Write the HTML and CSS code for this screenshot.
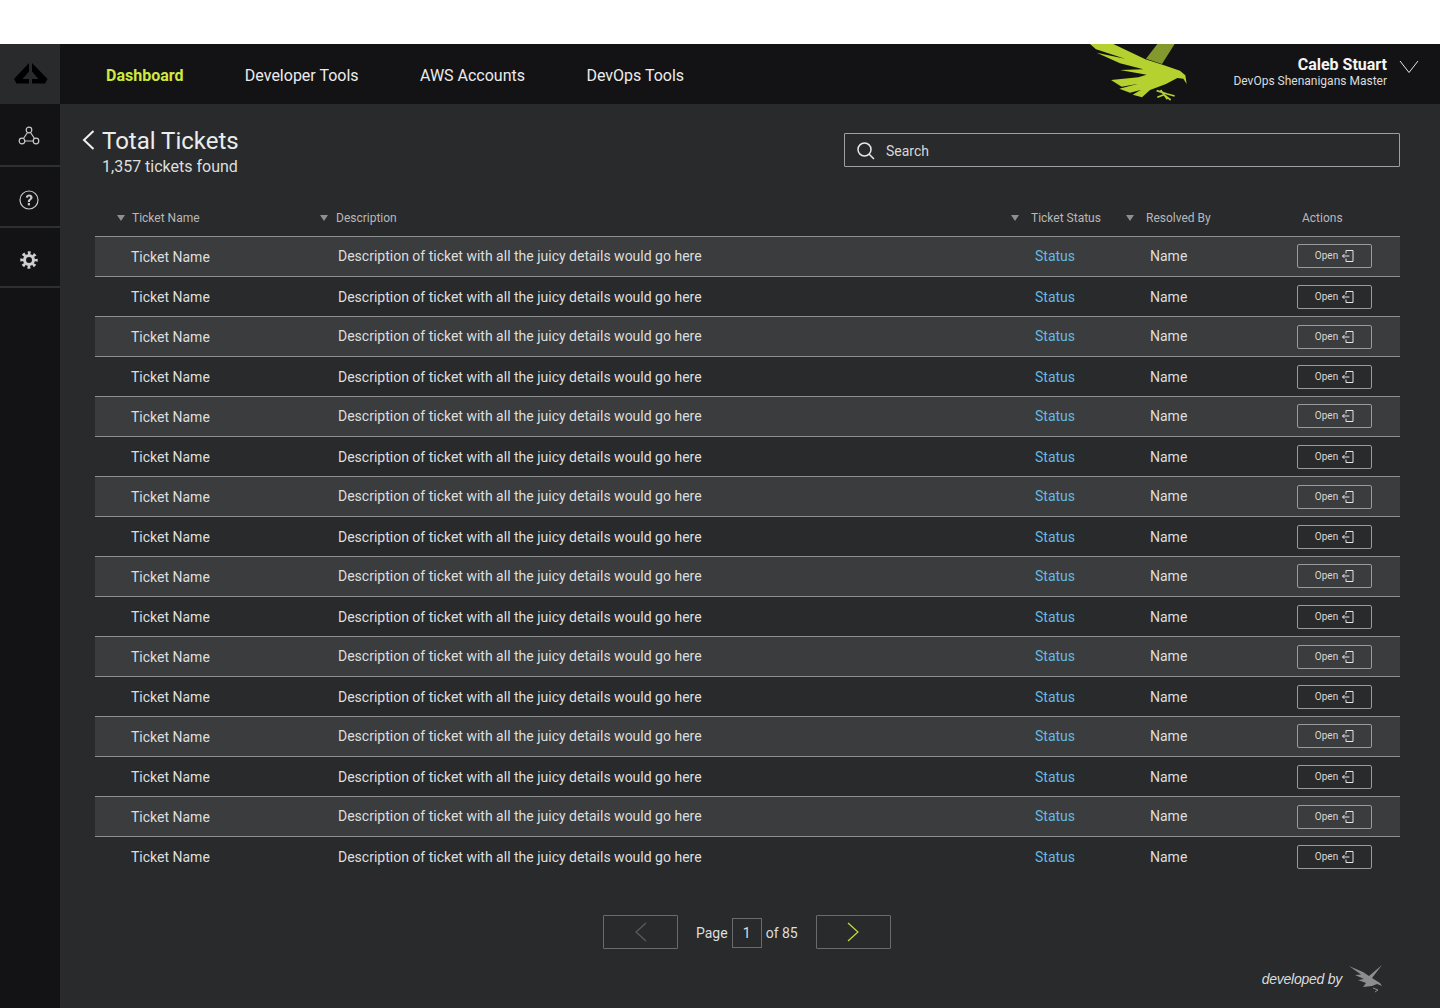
FILE: index.html
```html
<!DOCTYPE html>
<html lang="en">
<head>
<meta charset="utf-8">
<title>Total Tickets</title>
<link rel="stylesheet" href="styles.css">
</head>
<body>
<div class="topgap"></div>
<div class="app">
  <aside class="sidebar">
    <div class="brand">
      <svg class="brand-logo" width="34" height="22" viewBox="0 0 34 22"><path fill="#000" d="M15 0V8.500L8.500 16H15V20.500H2.500L0 16ZM18 0V8.500L24.500 16H18V20.500H31L33.500 16Z"/></svg>
    </div>
    <div class="side-item side-first">
      <svg width="22" height="20" viewBox="0 0 22 20" fill="none" stroke="#c8c8c8" stroke-width="1.200"><circle cx="11" cy="4" r="2.800"/><circle cx="4" cy="15" r="2.800"/><circle cx="18" cy="15" r="2.800"/><path d="M9.500 6.500L5.500 12.500M12.500 6.500L16.500 12.500M6.800 15H15.200"/></svg>
    </div>
    <div class="side-item side-mid">
      <svg width="20" height="20" viewBox="0 0 20 20"><circle cx="10" cy="10" r="9" fill="none" stroke="#c8c8c8" stroke-width="1.200"/><path d="M6.800 7.600C6.800 3.400 13.600 3.400 13.600 7.500C13.600 9.800 11 9.600 11 12H8.800C8.800 9 11.200 9.200 11.200 7.500C11.200 6 9 6 8.900 7.800Z" fill="#c8c8c8"/><rect x="8.800" y="13" width="2.200" height="2.400" fill="#c8c8c8"/></svg>
    </div>
    <div class="side-item side-last">
      <svg width="18" height="18" viewBox="0 0 20 20" fill="none" stroke="#cfcfcf"><circle cx="10" cy="10" r="5" stroke-width="3.400"/><circle cx="10" cy="10" r="7.800" stroke-width="3.800" stroke-dasharray="3.060 3.066" stroke-dashoffset="1.530"/></svg>
    </div>
  </aside>
  <div class="content">
    <header class="nav">
      <nav class="nav-links">
        <a class="nav-link nav-active">Dashboard</a>
        <a class="nav-link">Developer Tools</a>
        <a class="nav-link">AWS Accounts</a>
        <a class="nav-link">DevOps Tools</a>
      </nav>
      <svg class="eagle" width="120" height="60" viewBox="0 12 360 180">
        <path fill="#83992d" d="M232 12H284L246 72L198 56Z"/>
        <path fill="#b4d12f" d="M30 12H100L196 58L250 75L300 92L316 106L320 132L310 116L292 114L258 132L210 150L186 172L158 164L182 150L150 158L118 146L172 132L125 140L93 120L175 112L200 104L120 90L190 88L120 70L50 38L135 56L48 28Z"/>
        <path fill="none" stroke="#b4d12f" stroke-width="5" d="M230 152L262 162L284 168M242 150L262 178M232 172L252 164L272 180"/>
      </svg>
      <div class="user">
        <div class="user-name">Caleb Stuart</div>
        <div class="user-role">DevOps Shenanigans Master</div>
      </div>
      <svg class="user-caret" width="20" height="14" viewBox="0 0 20 14" fill="none" stroke="#e6e6e6" stroke-width="1"><path d="M1 1L10 12.500L19 1"/></svg>
    </header>
    <main class="main">
      <div class="page-head">
        <svg class="back" width="13" height="20" viewBox="0 0 13 20" fill="none" stroke="#f0f0f0" stroke-width="2"><path d="M11.500 1L2 10L11.500 19"/></svg>
        <div class="titles">
          <h1 class="title">Total Tickets</h1>
          <p class="subtitle">1,357 tickets found</p>
        </div>
        <label class="search">
          <svg width="18" height="18" viewBox="0 0 18 18" fill="none" stroke="#e8e8e8" stroke-width="1.500"><circle cx="7.500" cy="7.500" r="6.500"/><path d="M12.200 12.200L17 17"/></svg>
          <span class="search-text">Search</span>
        </label>
      </div>
      <section class="table">
        <div class="thead">
          <div class="th th-name"><i class="sort"></i>Ticket Name</div>
          <div class="th th-desc"><i class="sort"></i>Description</div>
          <div class="th th-status"><i class="sort"></i>Ticket Status</div>
          <div class="th th-res"><i class="sort"></i>Resolved By</div>
          <div class="th">Actions</div>
        </div>
        <div class="row"><div class="c-name">Ticket Name</div><div class="c-desc">Description of ticket with all the juicy details would go here</div><div class="c-status">Status</div><div class="c-res">Name</div><div><a class="open">Open<svg class="open-ic" width="12" height="12" viewBox="0 0 12 12" fill="none" stroke="#e4e4e4"><path d="M4 3.500V.5H11V11.500H4V8.500M7.500 6H.5M2.500 4L.5 6L2.500 8"/></svg></a></div></div>
        <div class="row"><div class="c-name">Ticket Name</div><div class="c-desc">Description of ticket with all the juicy details would go here</div><div class="c-status">Status</div><div class="c-res">Name</div><div><a class="open">Open<svg class="open-ic" width="12" height="12" viewBox="0 0 12 12" fill="none" stroke="#e4e4e4"><path d="M4 3.500V.5H11V11.500H4V8.500M7.500 6H.5M2.500 4L.5 6L2.500 8"/></svg></a></div></div>
        <div class="row"><div class="c-name">Ticket Name</div><div class="c-desc">Description of ticket with all the juicy details would go here</div><div class="c-status">Status</div><div class="c-res">Name</div><div><a class="open">Open<svg class="open-ic" width="12" height="12" viewBox="0 0 12 12" fill="none" stroke="#e4e4e4"><path d="M4 3.500V.5H11V11.500H4V8.500M7.500 6H.5M2.500 4L.5 6L2.500 8"/></svg></a></div></div>
        <div class="row"><div class="c-name">Ticket Name</div><div class="c-desc">Description of ticket with all the juicy details would go here</div><div class="c-status">Status</div><div class="c-res">Name</div><div><a class="open">Open<svg class="open-ic" width="12" height="12" viewBox="0 0 12 12" fill="none" stroke="#e4e4e4"><path d="M4 3.500V.5H11V11.500H4V8.500M7.500 6H.5M2.500 4L.5 6L2.500 8"/></svg></a></div></div>
        <div class="row"><div class="c-name">Ticket Name</div><div class="c-desc">Description of ticket with all the juicy details would go here</div><div class="c-status">Status</div><div class="c-res">Name</div><div><a class="open">Open<svg class="open-ic" width="12" height="12" viewBox="0 0 12 12" fill="none" stroke="#e4e4e4"><path d="M4 3.500V.5H11V11.500H4V8.500M7.500 6H.5M2.500 4L.5 6L2.500 8"/></svg></a></div></div>
        <div class="row"><div class="c-name">Ticket Name</div><div class="c-desc">Description of ticket with all the juicy details would go here</div><div class="c-status">Status</div><div class="c-res">Name</div><div><a class="open">Open<svg class="open-ic" width="12" height="12" viewBox="0 0 12 12" fill="none" stroke="#e4e4e4"><path d="M4 3.500V.5H11V11.500H4V8.500M7.500 6H.5M2.500 4L.5 6L2.500 8"/></svg></a></div></div>
        <div class="row"><div class="c-name">Ticket Name</div><div class="c-desc">Description of ticket with all the juicy details would go here</div><div class="c-status">Status</div><div class="c-res">Name</div><div><a class="open">Open<svg class="open-ic" width="12" height="12" viewBox="0 0 12 12" fill="none" stroke="#e4e4e4"><path d="M4 3.500V.5H11V11.500H4V8.500M7.500 6H.5M2.500 4L.5 6L2.500 8"/></svg></a></div></div>
        <div class="row"><div class="c-name">Ticket Name</div><div class="c-desc">Description of ticket with all the juicy details would go here</div><div class="c-status">Status</div><div class="c-res">Name</div><div><a class="open">Open<svg class="open-ic" width="12" height="12" viewBox="0 0 12 12" fill="none" stroke="#e4e4e4"><path d="M4 3.500V.5H11V11.500H4V8.500M7.500 6H.5M2.500 4L.5 6L2.500 8"/></svg></a></div></div>
        <div class="row"><div class="c-name">Ticket Name</div><div class="c-desc">Description of ticket with all the juicy details would go here</div><div class="c-status">Status</div><div class="c-res">Name</div><div><a class="open">Open<svg class="open-ic" width="12" height="12" viewBox="0 0 12 12" fill="none" stroke="#e4e4e4"><path d="M4 3.500V.5H11V11.500H4V8.500M7.500 6H.5M2.500 4L.5 6L2.500 8"/></svg></a></div></div>
        <div class="row"><div class="c-name">Ticket Name</div><div class="c-desc">Description of ticket with all the juicy details would go here</div><div class="c-status">Status</div><div class="c-res">Name</div><div><a class="open">Open<svg class="open-ic" width="12" height="12" viewBox="0 0 12 12" fill="none" stroke="#e4e4e4"><path d="M4 3.500V.5H11V11.500H4V8.500M7.500 6H.5M2.500 4L.5 6L2.500 8"/></svg></a></div></div>
        <div class="row"><div class="c-name">Ticket Name</div><div class="c-desc">Description of ticket with all the juicy details would go here</div><div class="c-status">Status</div><div class="c-res">Name</div><div><a class="open">Open<svg class="open-ic" width="12" height="12" viewBox="0 0 12 12" fill="none" stroke="#e4e4e4"><path d="M4 3.500V.5H11V11.500H4V8.500M7.500 6H.5M2.500 4L.5 6L2.500 8"/></svg></a></div></div>
        <div class="row"><div class="c-name">Ticket Name</div><div class="c-desc">Description of ticket with all the juicy details would go here</div><div class="c-status">Status</div><div class="c-res">Name</div><div><a class="open">Open<svg class="open-ic" width="12" height="12" viewBox="0 0 12 12" fill="none" stroke="#e4e4e4"><path d="M4 3.500V.5H11V11.500H4V8.500M7.500 6H.5M2.500 4L.5 6L2.500 8"/></svg></a></div></div>
        <div class="row"><div class="c-name">Ticket Name</div><div class="c-desc">Description of ticket with all the juicy details would go here</div><div class="c-status">Status</div><div class="c-res">Name</div><div><a class="open">Open<svg class="open-ic" width="12" height="12" viewBox="0 0 12 12" fill="none" stroke="#e4e4e4"><path d="M4 3.500V.5H11V11.500H4V8.500M7.500 6H.5M2.500 4L.5 6L2.500 8"/></svg></a></div></div>
        <div class="row"><div class="c-name">Ticket Name</div><div class="c-desc">Description of ticket with all the juicy details would go here</div><div class="c-status">Status</div><div class="c-res">Name</div><div><a class="open">Open<svg class="open-ic" width="12" height="12" viewBox="0 0 12 12" fill="none" stroke="#e4e4e4"><path d="M4 3.500V.5H11V11.500H4V8.500M7.500 6H.5M2.500 4L.5 6L2.500 8"/></svg></a></div></div>
        <div class="row"><div class="c-name">Ticket Name</div><div class="c-desc">Description of ticket with all the juicy details would go here</div><div class="c-status">Status</div><div class="c-res">Name</div><div><a class="open">Open<svg class="open-ic" width="12" height="12" viewBox="0 0 12 12" fill="none" stroke="#e4e4e4"><path d="M4 3.500V.5H11V11.500H4V8.500M7.500 6H.5M2.500 4L.5 6L2.500 8"/></svg></a></div></div>
        <div class="row"><div class="c-name">Ticket Name</div><div class="c-desc">Description of ticket with all the juicy details would go here</div><div class="c-status">Status</div><div class="c-res">Name</div><div><a class="open">Open<svg class="open-ic" width="12" height="12" viewBox="0 0 12 12" fill="none" stroke="#e4e4e4"><path d="M4 3.500V.5H11V11.500H4V8.500M7.500 6H.5M2.500 4L.5 6L2.500 8"/></svg></a></div></div>
      </section>
      <div class="pager">
        <a class="page-btn"><svg width="12" height="20" viewBox="0 0 12 20" fill="none" stroke="#5c5d5f" stroke-width="1.200"><path d="M11 1L1 10L11 19"/></svg></a>
        <span class="page-label">Page</span>
        <span class="page-num">1</span>
        <span class="page-of">of 85</span>
        <a class="page-btn page-next"><svg width="12" height="20" viewBox="0 0 12 20" fill="none" stroke="#c5de3a" stroke-width="1.200"><path d="M1 1L11 10L1 19"/></svg></a>
      </div>
      <footer class="credit">
        <span class="credit-text">developed by</span>
        <svg width="34" height="28" viewBox="0 0 34 28"><path fill="#8d8d8d" d="M0 1L14 7L20 11L33 0L23 13L31 18L33 21L28 19L23 21L14 22L17 18L9 15L15 14L6 10L12 9.500Z"/><path fill="none" stroke="#8d8d8d" d="M24 23L29 25L26 27"/></svg>
      </footer>
    </main>
  </div>
</div>
</body>
</html>
```
FILE: styles.css
```css
* { box-sizing: border-box; }
html, body { margin: 0; padding: 0; }
body {
  background: #fff;
  color: #ececec;
  font-family: Roboto, "Liberation Sans", sans-serif;
  font-size: 14px;
  height: 1008px;
  overflow: hidden;
}
.topgap { height: 44px; background: #fff; }
.app { display: flex; height: 964px; }

.sidebar { width: 60px; flex: none; background: #131315; }
.brand { height: 60px; background: #292a2c; display: flex; align-items: center; justify-content: center; padding-left: 2px; }
.side-item { display: flex; align-items: center; justify-content: center; border-bottom: 2px solid #2e2f31; padding-right: 2px; }
.side-first { height: 63px; padding-top: 3px; }
.side-mid { height: 61px; padding-top: 6px; }
.side-last { height: 60px; padding-top: 6px; }

.content { flex: 1; min-width: 0; display: flex; flex-direction: column; }
.nav { height: 60px; flex: none; background: #131315; display: flex; align-items: center; padding: 2px 21px 0 46px; }
.nav-links { display: flex; gap: 61.400px; }
.nav-link { font-size: 16px; color: #ececec; }
.nav-active { color: #d0e83f; font-weight: 700; }
.eagle { margin-left: auto; margin-right: 33px; margin-top: -2px; }
.user { text-align: right; margin-right: 12px; margin-top: -6px; }
.user-name { font-size: 16px; font-weight: 700; color: #f4f4f4; line-height: 18px; }
.user-role { font-size: 12px; color: #dcdcdc; line-height: 14px; }
.user-caret { margin-top: -17px; }

.main { flex: 1; background: #292a2c; position: relative; padding: 0 40px 0 35px; }
.page-head { display: flex; height: 96px; padding-top: 25px; margin-left: -14px; }
.back { margin: 1px 7px 0 1px; flex: none; }
.titles { flex: none; }
.title { margin: 0; font-size: 24px; font-weight: 400; line-height: 24px; color: #ececec; }
.subtitle { margin: 2px 0 0; font-size: 16px; line-height: 24px; color: #dedede; }
.search { margin-left: auto; width: 556px; height: 34px; margin-top: 4px; border: 1px solid #a0a0a0; border-radius: 1px; display: flex; align-items: center; padding: 2px 0 0 12px; gap: 11px; }
.search-text { font-size: 14px; color: #d8d8d8; }

.thead { display: grid; grid-template-columns: 203px 691px 115px 176px 1fr; height: 36px; padding-left: 22px; align-items: center; }
.th { display: flex; align-items: center; font-size: 12px; color: #b8b8b8; }
.sort { width: 0; height: 0; border-left: 4.500px solid transparent; border-right: 4.500px solid transparent; border-top: 6px solid #8f8f8f; margin-right: 7px; }
.th-desc .sort { margin-right: 8px; }
.th-status .sort, .th-res .sort { margin-right: 12px; }

.row { display: grid; grid-template-columns: 207px 697px 115px 147px 1fr; height: 40px; padding-left: 36px; align-items: center; border-top: 1px solid #8e8f90; font-size: 14px; color: #dedede; }
.row:nth-child(even) { background: #3b3c3e; }
.row:nth-child(even) .c-desc, .row:nth-child(even) .c-status, .row:nth-child(even) .c-res { padding-bottom: 2px; }
.row:nth-child(4n+2) .open { margin-top: -2px; }
.c-status { color: #63bbe2; }
.open { display: flex; align-items: center; justify-content: center; gap: 4px; width: 75px; height: 24px; border: 1px solid #9a9a9a; border-radius: 2px; font-size: 10px; color: #d8d8d8; }
.open-ic { flex: none; }

.pager { display: flex; align-items: center; margin: 39px 0 0 508px; height: 34px; }
.page-btn { width: 75px; height: 34px; border: 1px solid #6a6b6d; border-radius: 1px; display: flex; align-items: center; justify-content: center; }
.page-label { margin-left: 18px; }
.page-num { width: 30px; height: 30px; margin: 2px 4px 0; border: 1px solid #6a6b6d; display: flex; align-items: center; justify-content: center; color: #dedede; }
.page-of { margin-right: 18px; }
.page-label, .page-of { color: #dedede; padding-top: 2px; }
.credit { display: flex; align-items: center; justify-content: flex-end; gap: 7px; margin-top: 16px; padding-right: 17px; }
.credit-text { font-family: "Liberation Sans", sans-serif; font-style: italic; font-size: 14px; letter-spacing: -0.250px; color: #dcdcdc; }
```
